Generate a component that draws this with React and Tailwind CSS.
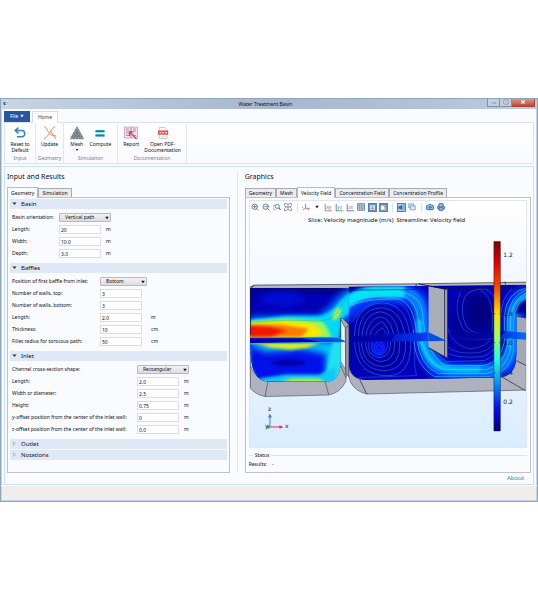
import React, { useState } from 'react';
import { Camera, Printer, ZoomIn, ZoomOut } from 'lucide-react';

const SECTIONS = [
  {
    title: 'Basin',
    open: true,
    labelCol: 'w-[47px]',
    unitCol: 'pl-[5px]',
    select: { id: 'orientation', label: 'Basin orientation:', width: 'w-[52px]', options: ['Vertical path', 'Horizontal path'] },
    rows: [
      ['Length:', '20', 'm'],
      ['Width:', '10.0', 'm'],
      ['Depth:', '3.0', 'm'],
    ],
  },
  {
    title: 'Baffles',
    open: true,
    labelCol: 'w-[88px]',
    unitCol: 'pl-[9px]',
    select: { id: 'first-baffle', label: 'Position of first baffle from inlet:', width: 'w-[47px]', options: ['Bottom', 'Top'] },
    rows: [
      ['Number of walls, top:', '3', ''],
      ['Number of walls, bottom:', '3', ''],
      ['Length:', '2.0', 'm'],
      ['Thickness:', '10', 'cm'],
      ['Fillet radius for tortuous path:', '50', 'cm'],
    ],
  },
  {
    title: 'Inlet',
    open: true,
    labelCol: 'w-[125px]',
    unitCol: 'pl-[5px]',
    select: { id: 'channel-shape', label: 'Channel cross-section shape:', width: 'w-[52px]', options: ['Rectangular', 'Circular'] },
    rows: [
      ['Length:', '2.0', 'm'],
      ['Width or diameter:', '2.5', 'm'],
      ['Height:', '0.75', 'm'],
      ['y-offset position from the center of the inlet wall:', '0', 'm'],
      ['z-offset position from the center of the inlet wall:', '0.0', 'm'],
    ],
  },
  { title: 'Outlet', open: false },
  { title: 'Notations', open: false },
];

const GRAPHICS_TABS = ['Geometry', 'Mesh', 'Velocity Field', 'Concentration Field', 'Concentration Profile'];

const LEGEND = [
  ['1.2', 255],
  ['1', 284],
  ['0.8', 314],
  ['0.6', 343],
  ['0.4', 373],
  ['0.2', 402],
];

/* ---------- ribbon icons ---------- */

const ResetIcon = () => (
  <svg viewBox="0 0 14 14" className="size-[14px]" fill="none" stroke="#2f7fc4" strokeWidth="1.5">
    <path d="M2.5 4.5h6.2c4 0 4 6.3 0 6.3H4" />
    <path d="M5.4 1.6 2.3 4.5l3.1 2.9" />
  </svg>
);

const UpdateIcon = () => (
  <svg viewBox="0 0 14 14" className="size-[14px]" fill="none" stroke="#f0785f" strokeWidth=".9">
    <path d="M1.3 .8C4 2 4.2 4.5 5.8 6.8S10 9.8 13.3 10" />
    <path d="M12.3 .8C9.5 1.5 8.8 3.5 7 6.5S4 11 .8 12.8" />
    <path d="M7.3 4.5 12.8 13" />
  </svg>
);

const MeshIcon = () => (
  <svg viewBox="0 0 14 14" className="size-[14px]">
    <path d="M7 .8 13.7 12.8H.3z" fill="#a3a8ad" stroke="#666c72" strokeWidth=".6" />
    <path d="M5.3 4h3.4M3.7 7h6.6M2 10h10M5.3 4l5 8.8M8.7 4l-5 8.8M3.7 7l3.3 5.8M10.3 7 7 12.8M2 10l1.7 2.8M12 10l-1.7 2.8" stroke="#4b5157" strokeWidth=".5" />
  </svg>
);

const ComputeIcon = () => (
  <svg viewBox="0 0 14 14" className="size-[14px]">
    <path d="M2.5 4h9v2.2h-9zM2.5 8.2h9v2.2h-9z" fill="#16a0b0" />
    <path d="M2.5 5.6h9M2.5 9.8h9" stroke="#0b6f8c" strokeWidth=".8" />
  </svg>
);

const ReportIcon = () => (
  <svg viewBox="0 0 14 14" className="size-[14px]" fill="none">
    <path d="M.5 1h6v11h-6zM7.5 1h6v11h-6z" fill="#f7e3ed" stroke="#c48aa8" strokeWidth=".7" />
    <path d="M2 3h3M2 5h3M2 7h3M2 9.5h3M9 3h3M9 5h3M9 9.5h3" stroke="#a67892" strokeWidth=".8" />
    <path d="M12.5 13 6 6.2M5.5 10V5.8h4.3" stroke="#cf2f7b" strokeWidth="1.1" />
  </svg>
);

const PdfIcon = () => (
  <svg viewBox="0 0 14 14" className="size-[14px]">
    <path d="M3.3 1.5h5.7l2 2v9H3.3z" fill="#fbfbfb" stroke="#b5b9bd" strokeWidth=".7" />
    <path d="M2 4.5h10.2v4.2H2z" fill="#e8503c" />
    <path d="M3.6 6.6h1.6M6.3 6.6h1.6M9 6.6h1.8" stroke="#fff" strokeWidth="1.2" />
    <path d="M5 10.8h4" stroke="#c4c8cc" strokeWidth=".7" />
  </svg>
);

/* ---------- graphics toolbar icons ---------- */

const ZoomBoxIcon = () => (
  <svg viewBox="0 0 9 9" className="size-[8px]" fill="none" stroke="#3f668f">
    <path d="M.5 6.5V2.5h2M1 7.5h3" strokeWidth=".7" strokeDasharray="1 .6" />
    <circle cx="4.8" cy="3.8" r="2.3" strokeWidth=".9" />
    <path d="m6.5 5.6 2 2.2" strokeWidth="1.2" />
  </svg>
);

const ExtentsIcon = () => (
  <svg viewBox="0 0 9 9" className="size-[8px]" fill="none" stroke="#55779d" strokeWidth=".8">
    <path d="M.6 3V.6H3M6 .6h2.4V3M8.4 6v2.4H6M3 8.4H.6V6" />
    <path d="M4.5 1v7M1 4.5h7M3.5 2l1-1 1 1M3.5 7l1 1 1-1M2 3.5l-1 1 1 1M7 3.5l1 1-1 1" />
  </svg>
);

const AxesIcon = () => (
  <svg viewBox="0 0 9 9" className="size-[8px]" fill="none" strokeWidth=".9">
    <path d="M4 6V1" stroke="#3a80c4" />
    <path d="M4 6H8.6" stroke="#d8407c" />
    <path d="M4 6 .6 7.6" stroke="#4aa84e" />
    <path d="M.5 4.5v1.3M6.5 7.5h1.5" stroke="#3a80c4" />
  </svg>
);

const PlaneIcon = ({ label, up, right }) => (
  <svg viewBox="0 0 9 9" className="size-[9px]" fill="none" strokeWidth=".9">
    <path d="M1.2 8V.8" stroke={up} />
    <path d="M1 7.8h7.3" stroke={right} />
    <text x="2.2" y="5.8" fontSize="5" fill="#66707c" fontFamily="Open Sans, sans-serif">{label}</text>
  </svg>
);

const GridIcon = () => (
  <svg viewBox="0 0 9 9" className="size-[8px]">
    <path d="M.5 .8h8v7.4h-8z" fill="#c3d2e2" stroke="#56687c" strokeWidth=".8" />
    <path d="M3 1v7M5.5 1v7M.5 3.2h8M.5 5.6h8" stroke="#6f8399" strokeWidth=".6" />
  </svg>
);

const TriadBoxIcon = () => (
  <svg viewBox="0 0 9 9" className="size-[7px]" fill="none" strokeWidth=".9">
    <path d="M.5 .8h8v7.4h-8z" fill="#dcecf8" stroke="#2d5f96" />
    <path d="M4 5.5V2" stroke="#2b6cb3" />
    <path d="M4 5.5h3" stroke="#c33c78" />
    <path d="M4 5.5 2 6.8" stroke="#3a9c45" />
  </svg>
);

const LegendIcon = () => (
  <svg viewBox="0 0 9 9" className="size-[7px]" strokeWidth=".8">
    <path d="M.5 .8h8v7.4h-8z" fill="#eef5fb" stroke="#2d5f96" />
    <path d="M.5 1.3h8" stroke="#2d5f96" />
    <path d="M5.8 2.2h1.5v2.6H5.8z" fill="#d9422f" />
    <path d="M5.8 4.8h1.5v2.6H5.8z" fill="#e59a34" />
  </svg>
);

const LightIcon = () => (
  <svg viewBox="0 0 9 9" className="size-[7px]">
    <path d="M.6 3h2.2L5.3 1v7L2.8 6H.6z" fill="#2d65a6" />
    <path d="M6 1h2.5v7H6z" fill="#74a9dc" />
  </svg>
);

const TransparencyIcon = () => (
  <svg viewBox="0 0 9 9" className="size-[8px]" fill="#d9e8f5" stroke="#5b93c5" strokeWidth=".8">
    <path d="M.8 1h5.5v4.5H.8z" />
    <path d="M2.6 3.2h5.6v4.5H2.6z" />
  </svg>
);

const ToolButton = ({ label, active, children }) => (
  <button
    type="button"
    aria-label={label}
    aria-pressed={active}
    className={`flex size-[9px] items-center justify-center ${active ? 'border border-[#4f83bb] bg-[#a9cdee]' : ''}`}
  >
    {children}
  </button>
);

const ToolSeparator = () => <span className="mx-[2px] h-[9px] w-px bg-[#dcdfe5]" />;

/* ---------- plot ---------- */

const Line = ({ d, color = '#2a68f0', w = 0.9, o = 0.75 }) => (
  <path d={d} fill="none" stroke={color} strokeWidth={w} opacity={o} />
);

const VelocityPlot = () => (
  <svg viewBox="249 214 277 234" className="block w-full" role="img" aria-label="Velocity field">
    <defs>
      <linearGradient id="sky" x1="0" y1="0" x2="0" y2="1">
        <stop offset="0" stopColor="#fdfdff" />
        <stop offset=".35" stopColor="#f1f7ff" />
        <stop offset="1" stopColor="#d9edff" />
      </linearGradient>
      <linearGradient id="jet" x1="0" y1="0" x2="0" y2="1">
        <stop offset="0" stopColor="#800000" />
        <stop offset=".12" stopColor="#e80000" />
        <stop offset=".25" stopColor="#ff5000" />
        <stop offset=".38" stopColor="#ffe000" />
        <stop offset=".5" stopColor="#a0ff60" />
        <stop offset=".62" stopColor="#20ffe0" />
        <stop offset=".75" stopColor="#0090ff" />
        <stop offset=".88" stopColor="#0010f0" />
        <stop offset="1" stopColor="#000080" />
      </linearGradient>
      <linearGradient id="slab" x1="0" y1="0" x2="1" y2="0">
        <stop offset="0" stopColor="#0000a8" />
        <stop offset=".7" stopColor="#0030e8" />
        <stop offset="1" stopColor="#0070f8" />
      </linearGradient>
      <filter id="soft1" x="-30%" y="-60%" width="160%" height="220%">
        <feGaussianBlur stdDeviation="1.8" />
      </filter>
      <filter id="soft2" x="-30%" y="-60%" width="160%" height="220%">
        <feGaussianBlur stdDeviation="3.4" />
      </filter>
      <clipPath id="chamberA">
        <path d="M249 288H349V326L340 319V360Q340 382 325 382H269Q251 382 250 356L249 352Z" />
      </clipPath>
      <clipPath id="chamberB">
        <path d="M348 287 526 285V318L516 316V355Q516 377 498 378L365 380.5Q348 380 348 362Z" />
      </clipPath>
      <clipPath id="upper">
        <path d="M249 288 526 285V338H249Z" />
      </clipPath>
    </defs>

    <path d="M249 214h277v234H249z" fill="url(#sky)" />

    {/* basin walls */}
    <path d="M249 287 253 285.3 418 284 526 282.3V288H249z" fill="#b4b8c2" />
    <path d="M249 287.5 253 285.3 418 284 526 282.3" fill="none" stroke="#333" strokeWidth=".7" />
    <path d="M249 352 250 367Q255 381 267 382L330 381Q338 376 340 362L346 372 345 382Q339 394 327 395.5L264 397Q254 395 249 388Z" fill="#aeb2be" stroke="#444a54" strokeWidth=".6" />
    <path d="M267 382 264 397M324 381 328 395.5M249 367V388M340 366 345 378" stroke="#3a3e48" strokeWidth=".6" />
    <path d="M348 366Q350 379 361 380L504 377Q516 374 516 355V316L526 318V390.5L366 394.5Q355 392 350 383L347 374Z" fill="#aeb2be" stroke="#444a54" strokeWidth=".6" />
    <path d="M516 316 526 318V366L516 361Z" fill="#a3a7b3" />
    <path d="M516 361 526 366M501 377 525 391M359 380 366 394.5M516 316.5 526 318.5" stroke="#23262c" strokeWidth=".7" />

    {/* inlet chamber */}
    <g clipPath="url(#chamberA)">
      <path d="M249 286h100v98H249z" fill="#0000b4" />
      <path d="M249 286h100v8H249z" fill="#000098" />
      <ellipse cx="282" cy="299" rx="22" ry="8" fill="#0018f0" opacity=".55" filter="url(#soft2)" />
      <path d="M249 316H316Q328 308 334 299L350 284H356V340H249Z" fill="#0060ff" filter="url(#soft2)" />
      <path d="M249 320 285 316H320Q332 312 339 301L352 290V310L341 320 338 340H249Z" fill="#00d8f8" filter="url(#soft1)" />
      <path d="M249 321.5 285 319 320 321Q326 324 331 338H249Z" fill="#90f860" filter="url(#soft1)" />
      <path d="M249 323.5 285 321.5 312 324 324 334 312 338H249Z" fill="#f8e800" filter="url(#soft1)" />
      <path d="M249 325 280 325 308 329 300 337H249Z" fill="#ff7800" filter="url(#soft1)" />
      <path d="M247 326 268 327 286 331 270 337H247Z" fill="#f01800" filter="url(#soft1)" />
      <ellipse cx="336" cy="314" rx="3" ry="7" transform="rotate(28 336 314)" fill="#b8f040" filter="url(#soft1)" />
      <path d="M345 318h5v18h-9z" fill="#0040e0" filter="url(#soft1)" />

      <path d="M249 342h92v42H249z" fill="#0010e8" />
      <path d="M249 342H342V384H325V354L300 349 265 352 249 346Z" fill="#00c8f8" filter="url(#soft2)" />
      <path d="M332 342h11v42h-20z" fill="#20e0f0" filter="url(#soft1)" />
      <path d="M255 343H320L306 348 290 350 270 348Z" fill="#d8f020" filter="url(#soft1)" />
      <path d="M249 342h24l-8 2h-16z" fill="#ffb000" filter="url(#soft1)" />
      <path d="M258 385V379L285 375H318L335 368V385Z" fill="#10c8f8" filter="url(#soft1)" />
      <path d="M275 385 290 379H318L328 385Z" fill="#a8f050" filter="url(#soft1)" />
      <ellipse cx="288" cy="363" rx="17" ry="3" fill="#0000a0" filter="url(#soft1)" />
      <path d="M249 348v20l6 10" stroke="#00a8ff" strokeWidth="2" fill="none" filter="url(#soft1)" />
      <path d="M249 323Q285 319 318 321.5Q334 320 339 309T350 296" fill="none" stroke="#3a7a50" strokeWidth=".5" opacity=".5" />
    </g>

    {/* baffled chambers */}
    <g clipPath="url(#chamberB)">
      <path d="M346 283h180v100H346z" fill="#0000b8" />
      <path d="M344 316Q360 294 390 295H408Q424 300 425 325Q424 372 452 374H490Q514 370 514 340V320Q514 298 530 294" fill="none" stroke="#0038ff" strokeWidth="20" filter="url(#soft2)" />
      <path d="M342 306Q358 291 385 293H402Q419 294 421 318Q422 368 452 371H488Q510 368 513 340V320Q514 304 530 297" fill="none" stroke="#0080ff" strokeWidth="11" filter="url(#soft1)" />
      <path d="M338 310Q352 294 374 292H404" fill="none" stroke="#00e4f8" strokeWidth="11" filter="url(#soft1)" />
      <path d="M419 320Q419 354 436 366Q446 371 480 370" fill="none" stroke="#00c4f8" strokeWidth="5" filter="url(#soft1)" />
      <path d="M510 350V320Q512 300 528 296" fill="none" stroke="#00a8f8" strokeWidth="4" filter="url(#soft1)" />
      <ellipse cx="379" cy="340" rx="30" ry="35" fill="#0000a0" filter="url(#soft2)" />
      <ellipse cx="472" cy="325" rx="22" ry="35" fill="#000098" filter="url(#soft2)" />
      <ellipse cx="481" cy="312" rx="12" ry="16" fill="#000080" filter="url(#soft2)" />
      <ellipse cx="378" cy="348" rx="8" ry="10" fill="#0010f0" filter="url(#soft1)" />
      <path d="M515 314h12V300Q516 302 515 314Z" fill="#000090" filter="url(#soft1)" />

      {/* first recirculation */}
      <Line d="M354 345Q351 304 382 303Q409 305 410 345Q410 377 386 376Q357 376 354 345Z" />
      <Line d="M358 345Q355 309 381 308Q404 310 405 345Q405 371 383 371Q360 370 358 345Z" />
      <Line d="M361 346Q360 314 380 312Q398 314 399 345Q400 366 382 367Q363 366 361 346Z" />
      <Line d="M365 346Q364 320 380 317Q393 319 394 345Q394 361 380 362Q367 360 365 346Z" />
      <Line d="M368 348Q367 327 381 322Q389 327 390 345Q389 357 379 358Q369 357 368 348Z" />
      <Line d="M371 348Q371 333 382 328Q387 334 387 347Q385 354 379 355Q372 354 371 348Z" w={0.7} />
      <ellipse cx="378.5" cy="348" rx="5" ry="5.5" fill="none" stroke="#2c54e8" strokeWidth=".6" />
      <ellipse cx="378.5" cy="348" rx="2.5" ry="3" fill="none" stroke="#2c54e8" strokeWidth=".5" />
      <Line d="M352 322Q362 300 392 300Q412 303 414 345Q413 368 416 376L358 378" o={0.6} />

      {/* main stream */}
      <Line d="M350 306Q364 299 396 299Q414 302 416 336Q418 366 438 374L486 374Q506 370 510 350V320Q512 300 526 293" color="#4cc8f0" />
      <Line d="M352 302Q364 295 400 296Q417 298 419 330Q422 360 442 370L486 370Q503 366 507 346V318Q509 297 526 290" color="#4cc8f0" />
      <Line d="M384 292Q418 289 422 312Q424 352 444 366L484 366Q500 362 504 342V316Q506 293 526 288" color="#4cc8f0" />
      <Line d="M400 291Q422 290 425 310Q424 348 446 362L484 361Q496 357 500 340V318Q501 297 512 289" />
      <Line d="M413 330Q412 365 434 377L490 377Q511 372 513 350V322Q515 303 526 297" color="#3ab0f0" />
      <Line d="M448 354Q458 359 482 357Q494 354 497 340V312Q496 292 484 289Q468 289 464 298Q459 310 465 325Q470 334 480 333" o={0.7} />
      <Line d="M447 328Q452 345 468 349Q488 349 492 335V315Q490 293 480 291" o={0.6} />
      <Line d="M460 292Q452 310 462 328Q466 334 474 334" o={0.6} />
      <Line d="M447 347Q455 355 478 353Q489 351 494 343" o={0.6} />
    </g>

    <path d="M249 291.5 430 289.5M447 289 526 288" stroke="#101830" strokeWidth=".6" clipPath="url(#upper)" />
    <path d="M253 285.5 249.5 289V335" fill="none" stroke="#14181f" strokeWidth=".7" />

    {/* horizontal slices */}
    <path d="M249 338H336L346 342 249 343.5Z" fill="#0000b0" />
    <path d="M249 338H336L341 340" fill="none" stroke="#00a8f8" strokeWidth="1" />
    <path d="M249 344 300 343.5 346 342" fill="none" stroke="#30c0f0" strokeWidth=".8" />
    <path d="M300 338H336L345 342H318Z" fill="#0068f8" opacity=".7" />
    <path d="M349 336.5 428 332.5 446 341 348 342.5Z" fill="url(#slab)" />
    <path d="M349 336.5 395 334.5 390 341.8H349Z" fill="#0000a0" opacity=".8" />
    <path d="M447 336 500 331 526 333V340L505 338.5 470 341Z" fill="url(#slab)" />
    <path d="M447 334 505 331 500 338 470 340Z" fill="#000090" opacity=".8" />

    {/* baffles */}
    <path d="M339.5 319 342 318.5 348 325V372L345 375 344.5 328Z" fill="#a9adb8" stroke="#2f333b" strokeWidth=".6" />
    <path d="M344.5 328 348 325M340 320V338" stroke="#2f333b" strokeWidth=".6" />
    <path d="M345 329V374L348 377V326Z" fill="#999da8" stroke="#2f333b" strokeWidth=".5" />
    <path d="M428 286.5 444 289.5V357L428 348Z" fill="#a9adb8" />
    <path d="M444 289.5 447 289V358L444 357Z" fill="#9a9eaa" stroke="#2b2e36" strokeWidth=".7" />
    <path d="M428 348 444 357M418 284 446 289.5M415.5 284V286" fill="none" stroke="#15171c" strokeWidth=".9" />
    <path d="M428 332.5 446 341 428 341.5Z" fill="#0050e8" />

    {/* colour legend */}
    <path d="M493.5 241.5h6.5v190h-6.5z" fill="url(#jet)" stroke="#222" strokeWidth=".5" />
    {LEGEND.map(([text, y]) => (
      <g key={text}>
        <path d={`M493.5 ${y}h1.5M498.5 ${y}h1.5`} stroke="#222" strokeWidth=".5" />
        <text x="503" y={y + 2} fontSize="6" fill="#222" fontFamily="DejaVu Sans, sans-serif">{text}</text>
      </g>
    ))}

    {/* orientation triad */}
    <path d="M269 427V417" stroke="#3f86c6" />
    <path d="m267 418 2-4 2 4z" fill="#3f86c6" />
    <path d="M269 427.5H280" stroke="#e0286c" />
    <path d="m278.5 425.7 4 1.8-4 1.8z" fill="#e0286c" />
    <circle cx="267.5" cy="427.5" r="1.8" fill="#4ca64c" />
    <g fontSize="6" fill="#222" fontFamily="DejaVu Sans, sans-serif">
      <text x="267" y="412">z</text>
      <text x="264" y="429">y</text>
      <text x="284" y="429">x</text>
    </g>

    <text x="386" y="222" textAnchor="middle" fontSize="6" fill="#111" fontFamily="Noto Sans, sans-serif">
      {'Slice: Velocity magnitude (m/s)\u00a0 Streamline: Velocity field'}
    </text>
  </svg>
);

/* ---------- form ---------- */

const Section = ({ section }) => {
  const [open, setOpen] = useState(section.open);
  const { title, select, rows = [], labelCol, unitCol } = section;

  return (
    <section className={open ? '' : 'mb-px'}>
      <button
        type="button"
        aria-expanded={open}
        onClick={() => setOpen(!open)}
        className="flex h-[10px] w-full items-center gap-[4px] bg-[#dfe9f5] pl-[2px] text-[6px] leading-[10px]"
      >
        <svg viewBox="0 0 5 5" className="size-[5px]">
          {open ? <path d="M.5 1.5h4L2.5 4z" fill="#333" /> : <path d="M1.5 .7 3.7 2.5 1.5 4.3z" fill="none" stroke="#aaa" strokeWidth=".6" />}
        </svg>
        {title}
      </button>
      {open && select && (
        <div className="py-[3px] pl-[2px]">
          <div className="flex h-[12px] items-center">
            <label htmlFor={select.id} className={`shrink-0 whitespace-nowrap ${labelCol}`}>{select.label}</label>
            <span className={`relative ${select.width}`}>
              <select
                id={select.id}
                className="block h-[9px] w-full appearance-none rounded-[1px] border border-[#b9babd] bg-linear-to-b from-[#f3f3f3] to-[#dcdcdd] pl-[5px] leading-[7px]"
              >
                {select.options.map((o) => (
                  <option key={o}>{o}</option>
                ))}
              </select>
              <svg viewBox="0 0 4 4" className="pointer-events-none absolute top-[3px] right-[2px] size-[4px]">
                <path d="M.2 .7h3.6L2 3.2z" fill="#111" />
              </svg>
            </span>
          </div>
          {rows.map(([label, value, unit]) => {
            const id = `${title}-${label}`;
            return (
              <div key={label} className="flex h-[12px] items-center">
                <label htmlFor={id} className={`shrink-0 whitespace-nowrap ${labelCol}`}>{label}</label>
                <input
                  id={id}
                  defaultValue={value}
                  className="h-[9px] w-[42px] border border-[#dcdde1] bg-white px-[1px] leading-[7px]"
                />
                <span className={unitCol}>{unit}</span>
              </div>
            );
          })}
        </div>
      )}
    </section>
  );
};

const Tab = ({ label, active, onClick }) => (
  <button
    type="button"
    role="tab"
    aria-selected={active}
    onClick={onClick}
    className={`border border-b-0 px-[3px] leading-[8px] whitespace-nowrap ${
      active ? 'relative z-10 -mb-px h-[11px] border-[#b9bbc0] bg-[#fafbff]' : 'h-[9px] border-[#a9abb0] bg-[#ececef]'
    }`}
  >
    {label}
  </button>
);

const RibbonButton = ({ icon, lines, caret }) => (
  <button type="button" className="flex flex-col items-center leading-[6px] whitespace-nowrap">
    <span className="mb-px">{icon}</span>
    {lines.map((l) => (
      <span key={l}>{l}</span>
    ))}
    {caret && (
      <svg viewBox="0 0 4 4" className="mt-px size-[4px]">
        <path d="M.7 1h2.6L2 3z" fill="#222" />
      </svg>
    )}
  </button>
);

const RibbonGroup = ({ name, width, children }) => (
  <div className={`flex flex-col justify-between border-r border-[#e3e6ec] pt-[3px] pb-px ${width}`}>
    <div className="flex justify-evenly">{children}</div>
    <div className="text-center leading-[8px] text-[#7b7e85]">{name}</div>
  </div>
);

export default function App() {
  const [inputTab, setInputTab] = useState('Geometry');
  const [graphicsTab, setGraphicsTab] = useState('Velocity Field');

  return (
    <div className="flex min-h-screen flex-col justify-center bg-white font-['Noto_Sans',sans-serif] text-[5px] text-[#111]">
      <div className="border border-[#8fa6c1] bg-[#fafbff]">
        {/* Title bar */}
        <header className="flex h-[10px] items-center bg-linear-to-r from-[#c9d4e3] via-[#a5b7cf] to-[#bdcbdc]">
          <svg viewBox="0 0 6 6" className="ml-[2px] size-[5px]">
            <path d="M0 0h6v6H0z" fill="#e8f0f8" />
            <path d="M.5 1h3v4h-3z" fill="#2c65b0" />
            <circle cx="4" cy="3" r="1.5" fill="#e8f0fa" stroke="#3b78bc" strokeWidth=".6" />
          </svg>
          <h1 className="ml-[36px] flex-1 pt-px text-center leading-[9px]">Water Treatment Basin</h1>
          <div className="mr-[2px] flex h-[8px] self-start">
            <button type="button" aria-label="Minimize" className="flex w-[13px] items-center justify-center border border-t-0 border-[#7f91aa] bg-[#c3cfde]">
              <svg viewBox="0 0 6 6" className="size-[6px]"><path d="M1 3.5h4v1H1z" fill="#fff" stroke="#53657d" strokeWidth=".4" /></svg>
            </button>
            <button type="button" aria-label="Maximize" className="flex w-[12px] items-center justify-center border border-t-0 border-l-0 border-[#7f91aa] bg-[#c3cfde]">
              <svg viewBox="0 0 6 6" className="size-[6px]"><path d="M1 1h4v4H1z" fill="#fff" stroke="#53657d" strokeWidth=".6" /><path d="M2.3 2.3h1.4v1.4H2.3z" fill="#7f91aa" /></svg>
            </button>
            <button type="button" aria-label="Close" className="flex w-[23px] items-center justify-center border border-t-0 border-l-0 border-[#a04a3c] bg-linear-to-b from-[#e09383] to-[#c8402a]">
              <svg viewBox="0 0 6 6" className="size-[6px]"><path d="m1.3 1.3 3.4 3.4m0-3.4L1.3 4.7" stroke="#fff" strokeWidth="1.1" /></svg>
            </button>
          </div>
        </header>

        <div className="border-x border-[#c4d4e8] px-[2px]">
          {/* Ribbon */}
          <div className="flex h-[13px] items-end gap-[2px]">
            <button type="button" className="flex h-[11px] w-[26px] items-center justify-center gap-[2px] bg-[#2a569f] text-white">
              File
              <svg viewBox="0 0 4 4" className="size-[4px]"><path d="M.3 .8h3.4L2 3.5z" fill="#fff" /></svg>
            </button>
            <button type="button" className="relative z-10 -mb-px h-[12px] w-[26px] border border-b-0 border-[#d3deeb] bg-white text-[#444]">Home</button>
          </div>
          <div className="flex h-[42px] border border-[#d8e4f0] bg-linear-to-b from-white to-[#f8faff]">
            <RibbonGroup name="Input" width="w-[31px]">
              <RibbonButton icon={<ResetIcon />} lines={['Reset to', 'Default']} />
            </RibbonGroup>
            <RibbonGroup name="Geometry" width="w-[28px]">
              <RibbonButton icon={<UpdateIcon />} lines={['Update']} />
            </RibbonGroup>
            <RibbonGroup name="Simulation" width="w-[54px]">
              <RibbonButton icon={<MeshIcon />} lines={['Mesh']} caret />
              <RibbonButton icon={<ComputeIcon />} lines={['Compute']} />
            </RibbonGroup>
            <RibbonGroup name="Documentation" width="w-[69px]">
              <RibbonButton icon={<ReportIcon />} lines={['Report']} />
              <RibbonButton icon={<PdfIcon />} lines={['Open PDF-', 'Documentation']} />
            </RibbonGroup>
          </div>

          {/* Workspace */}
          <main className="mt-[2px] border border-[#c9e0f4] px-[2px] pt-[5px]">
            <div className="flex">
              <div className="flex w-[42.5%] flex-col">
                <h2 className="text-[7px] leading-[10px]">Input and Results</h2>
                <div role="tablist" className="mt-[6px] flex h-[9px] items-end">
                  {['Geometry', 'Simulation'].map((t) => (
                    <Tab key={t} label={t} active={t === inputTab} onClick={() => setInputTab(t)} />
                  ))}
                </div>
                <div className="flex-1 border border-[#bfc1c7] px-[2px] pt-px">
                  {SECTIONS.map((s) => (
                    <Section key={s.title} section={s} />
                  ))}
                </div>
              </div>

              <div className="mx-[7px] w-px bg-[#e3e5ec]" />

              <div className="flex min-w-0 flex-1 flex-col">
                <h2 className="text-[7px] leading-[10px]">Graphics</h2>
                <div role="tablist" className="mt-[6px] flex h-[9px] items-end">
                  {GRAPHICS_TABS.map((t) => (
                    <Tab key={t} label={t} active={t === graphicsTab} onClick={() => setGraphicsTab(t)} />
                  ))}
                </div>
                <div className="border border-[#bfc1c7] px-[3px] pt-[2px]">
                  <div className="border border-[#e2e5ec]">
                    <div className="flex h-[13px] items-center gap-[2px] bg-white pl-px">
                      <ToolButton label="Zoom in"><ZoomIn size={8} color="#3f668f" strokeWidth={2.5} /></ToolButton>
                      <ToolButton label="Zoom out"><ZoomOut size={8} color="#3f668f" strokeWidth={2.5} /></ToolButton>
                      <ToolButton label="Zoom box"><ZoomBoxIcon /></ToolButton>
                      <ToolButton label="Zoom extents"><ExtentsIcon /></ToolButton>
                      <ToolSeparator />
                      <ToolButton label="Default view"><AxesIcon /></ToolButton>
                      <ToolButton label="View menu">
                        <svg viewBox="0 0 4 4" className="size-[4px]"><path d="M.3 .8h3.4L2 3.5z" fill="#222" /></svg>
                      </ToolButton>
                      <ToolButton label="XY view"><PlaneIcon label="xy" up="#4aa84e" right="#d8708c" /></ToolButton>
                      <ToolButton label="YZ view"><PlaneIcon label="yz" up="#3a80c4" right="#4aa84e" /></ToolButton>
                      <ToolButton label="ZX view"><PlaneIcon label="zx" up="#d8408c" right="#3a80c4" /></ToolButton>
                      <ToolButton label="Show grid"><GridIcon /></ToolButton>
                      <ToolButton label="Show axis orientation" active><TriadBoxIcon /></ToolButton>
                      <ToolButton label="Show legends" active><LegendIcon /></ToolButton>
                      <ToolSeparator />
                      <ToolButton label="Scene light" active><LightIcon /></ToolButton>
                      <ToolButton label="Transparency"><TransparencyIcon /></ToolButton>
                      <ToolSeparator />
                      <ToolButton label="Snapshot"><Camera size={8} color="#2f6fb0" fill="#9cc4e8" strokeWidth={3} /></ToolButton>
                      <ToolButton label="Print"><Printer size={8} color="#2f6fb0" fill="#9cc4e8" strokeWidth={3} /></ToolButton>
                    </div>
                    <VelocityPlot />
                  </div>
                  <fieldset className="mt-[4px] border-t border-[#dfe1e7] pb-[2px]">
                    <legend className="ml-[4px] px-[2px] leading-[6px]">Status</legend>
                    <p className="flex gap-[5px] leading-[12px]">
                      <span>Results:</span>
                      <span>-</span>
                    </p>
                  </fieldset>
                </div>
              </div>
            </div>
            <div className="flex justify-end pr-[7px] pb-px">
              <a href="#about" className="text-[6px] leading-[10px] text-[#2b7fd0]">About</a>
            </div>
          </main>
        </div>
        <footer className="mt-px h-[15px] border border-b-[#c4d4e8] border-x-[#c4d4e8] border-t-[#f0edec] bg-[#f0edec]" />
      </div>
    </div>
  );
}
